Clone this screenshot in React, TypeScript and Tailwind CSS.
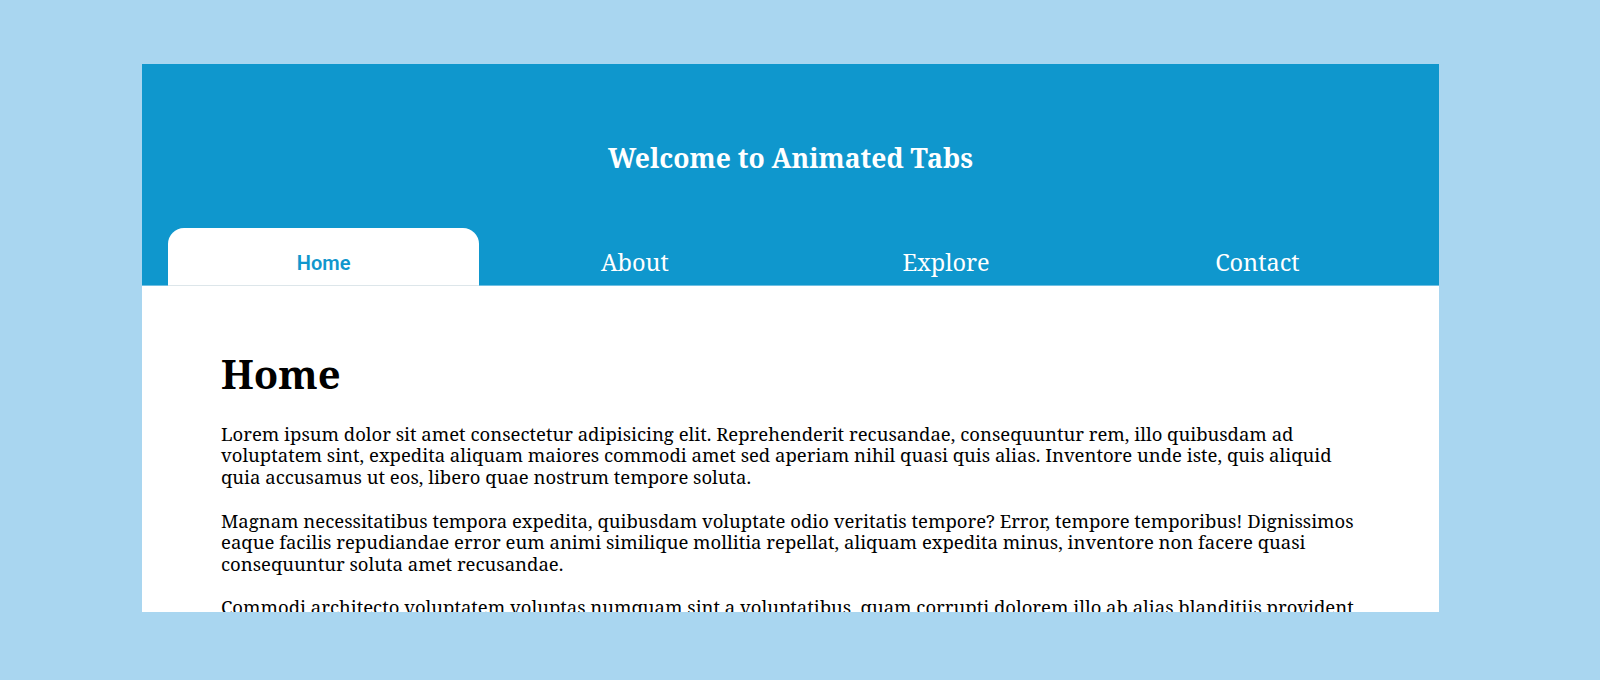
import { useState } from "react";

const TABS = ["Home", "About", "Explore", "Contact"];

const PARAGRAPHS = [
  "Lorem ipsum dolor sit amet consectetur adipisicing elit. Reprehenderit recusandae, consequuntur rem, illo quibusdam ad voluptatem sint, expedita aliquam maiores commodi amet sed aperiam nihil quasi quis alias. Inventore unde iste, quis aliquid quia accusamus ut eos, libero quae nostrum tempore soluta.",
  "Magnam necessitatibus tempora expedita, quibusdam voluptate odio veritatis tempore? Error, tempore temporibus! Dignissimos eaque facilis repudiandae error eum animi similique mollitia repellat, aliquam expedita minus, inventore non facere quasi consequuntur soluta amet recusandae.",
  "Commodi architecto voluptatem voluptas numquam sint a voluptatibus, quam corrupti dolorem illo ab alias blanditiis provident asperiores, nesciunt aut. Illum quas quibusdam assumenda dolores sed nisi officia fugiat, voluptas repudiandae amet.",
];

export default function App() {
  const [active, setActive] = useState("Home");

  return (
    <div className="h-[680px] overflow-hidden bg-[#a9d6f0] pt-[64px] pl-[142px] font-['Noto_Serif','DejaVu_Serif',serif]">
      <div className="flex h-[548px] w-[1297px] flex-col overflow-hidden bg-white">
        {/* header */}
        <div className="border-b border-[#6fbfe2] bg-[#0f97cd] px-[26px] pt-[77px]">
          <h1 className="text-center text-[26.5px] font-bold leading-[34px] text-white">
            Welcome to Animated Tabs
          </h1>
          <div className="mt-[53px] flex">
            {TABS.map((tab) =>
              tab === active ? (
                <button
                  key={tab}
                  onClick={() => setActive(tab)}
                  className="relative -mb-px flex h-[58px] flex-1 items-center justify-center rounded-t-[16px] border-b border-[#dde6ea] bg-white pt-[12px] font-['Roboto',sans-serif] text-[20px] font-semibold text-[#1097cd]"
                >
                  {tab}
                </button>
              ) : (
                <button
                  key={tab}
                  onClick={() => setActive(tab)}
                  className="flex h-[57px] flex-1 items-center justify-center pt-[12px] text-[23.5px] text-white"
                >
                  {tab}
                </button>
              )
            )}
          </div>
        </div>

        {/* content */}
        <div className="px-[79px] pt-[60px] text-black">
          <h2 className="text-[40px] font-bold leading-[56px]">{active}</h2>
          <div className="mt-[21px] space-y-[22.5px] text-[18.5px] leading-[21.4px]">
            {PARAGRAPHS.map((p) => (
              <p key={p}>{p}</p>
            ))}
          </div>
        </div>
      </div>
    </div>
  );
}
